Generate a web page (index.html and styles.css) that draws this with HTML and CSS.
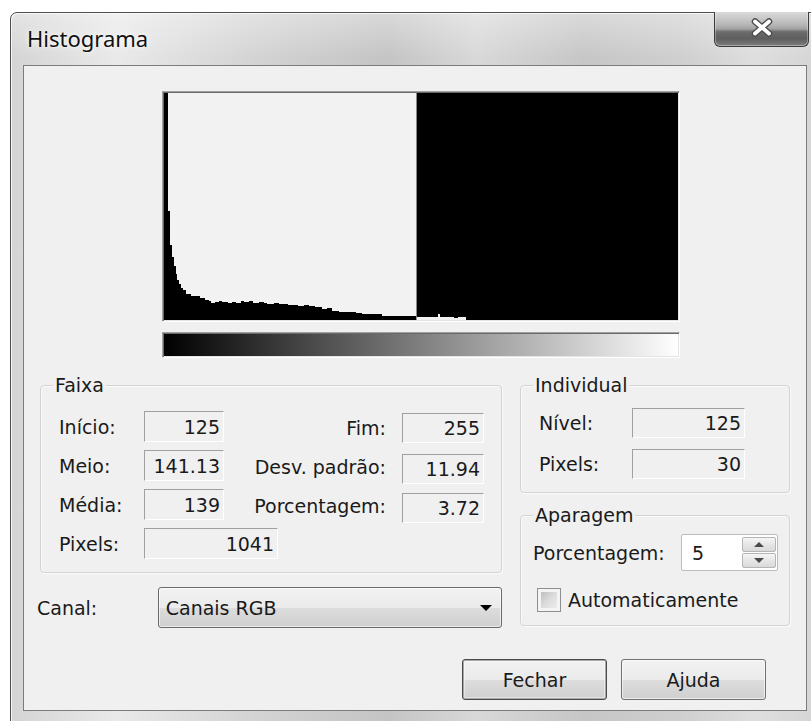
FILE: index.html
```html
<!DOCTYPE html>
<html lang="pt">
<head>
<meta charset="utf-8">
<title>Histograma</title>
<link rel="stylesheet" href="styles.css">
</head>
<body>
<div class="window">
  <div class="titlebar">
    <span class="title">Histograma</span>
    <button class="close" aria-label="Fechar janela">
      <svg width="24" height="19" viewBox="0 0 24 19">
        <path d="M5 3.5 L19 15.5 M19 3.5 L5 15.5" stroke="#4b4b4b" stroke-width="6.5" stroke-linecap="round" fill="none"/>
        <path d="M5 3.5 L19 15.5 M19 3.5 L5 15.5" stroke="#ffffff" stroke-width="3.8" stroke-linecap="round" fill="none"/>
      </svg>
    </button>
  </div>

  <div class="client">
    <div class="hist-box">
      <svg class="hist" width="514" height="227" viewBox="0 0 514 231" preserveAspectRatio="none" shape-rendering="crispEdges">
        <rect x="0" y="0" width="252" height="231" fill="#f2f2f2"/>
        <path fill="#000" d="M0 231 V0 H4 V120 H6 V155 H8 V167 H10 V176 H12 V184 H13 V190 H15 V194 H17 V198 H19 V200 H22 V205 H27 V207 H31 V207 H36 V209 H41 V211 H45 V212 H47 V214 H51 V213 H55 V212 H58 V213 H64 V214 H68 V213 H72 V214 H77 V212 H80 V213 H85 V212 H89 V214 H95 V213 H100 V214 H103 V215 H110 V214 H115 V215 H124 V216 H134 V217 H140 V216 H145 V217 H151 V218 H158 V220 H163 V219 H168 V222 H175 V223 H185 V223 H192 V224 H198 V225 H218 V227 H252 V231 Z"/>
        <rect x="252" y="0" width="262" height="231" fill="#000"/>
        <rect x="252" y="0" width="1" height="231" fill="#8a8a8a"/>
        <path fill="#f2f2f2" d="M253 231 V228 H274 V225 H276 V228 H290 V229 H294 V228 H302 V231 Z"/>
      </svg>
    </div>
    <div class="ramp"></div>

    <div class="panels">
      <div class="col-left">
        <div class="group faixa">
          <span class="group-title">Faixa</span>
          <div class="faixa-grid">
            <span class="lbl">Início:</span>
            <span class="field">125</span>
            <span class="lbl rlbl">Fim:</span>
            <span class="field rfield r1">255</span>

            <span class="lbl">Meio:</span>
            <span class="field">141.13</span>
            <span class="lbl rlbl">Desv. padrão:</span>
            <span class="field rfield r2">11.94</span>

            <span class="lbl">Média:</span>
            <span class="field">139</span>
            <span class="lbl rlbl">Porcentagem:</span>
            <span class="field rfield r2">3.72</span>

            <span class="lbl">Pixels:</span>
            <span class="field wide">1041</span>
          </div>
        </div>
        <div class="canal-row">
          <span class="canal-lbl">Canal:</span>
          <div class="combo">
            <span>Canais RGB</span>
            <span class="arrow"></span>
          </div>
        </div>
      </div>

      <div class="col-right">
        <div class="group individual">
          <span class="group-title">Individual</span>
          <div class="ind-grid">
            <span class="lbl">Nível:</span>
            <span class="field">125</span>
            <span class="lbl">Pixels:</span>
            <span class="field">30</span>
          </div>
        </div>
        <div class="group aparagem">
          <span class="group-title">Aparagem</span>
          <div class="spin-row">
            <span class="spin-lbl">Porcentagem:</span>
            <div class="spin">
              <span class="spin-val">5</span>
              <div class="spin-btns">
                <span class="spin-btn up"><i></i></span>
                <span class="spin-btn down"><i></i></span>
              </div>
            </div>
          </div>
          <label class="check-row">
            <span class="checkbox"></span>
            <span>Automaticamente</span>
          </label>
        </div>
      </div>
    </div>

    <div class="buttons">
      <button class="btn default">Fechar</button>
      <button class="btn">Ajuda</button>
    </div>
  </div>
</div>
</body>
</html>
```

FILE: styles.css
```css
html, body {
  margin: 0;
  padding: 0;
  background: #ffffff;
  width: 811px;
  height: 721px;
  overflow: hidden;
}

/* Aero glass frame */
.window {
  box-sizing: border-box;
  margin: 12px 0 0 10px;
  width: 820px;
  height: 730px;
  padding: 0 0 0 12px;
  border: 1px solid #4e4e4e;
  border-radius: 7px 7px 0 0;
  background:
    linear-gradient(180deg, rgba(255,255,255,0.35), rgba(255,255,255,0) 46px),
    linear-gradient(90deg, #d4d4d4 0, #e9e9e9 13%, #d3d3d3 30%, #c4c4c4 46%, #d8d8d8 57%, #c6c6c6 70%, #cfcfcf 82%, #dedede 91%, #d3d3d3 100%);
  box-shadow: inset 1px 1px 0 rgba(255,255,255,0.75);
}

.titlebar {
  display: flex;
  justify-content: space-between;
  align-items: flex-start;
  height: 52px;
  width: 786px;
}

.title {
  margin: 13px 0 0 4px;
  font-family: "Noto Sans", "Open Sans", sans-serif;
  font-size: 22px;
  line-height: 24px;
  color: #111;
  text-shadow: 0 0 8px rgba(255,255,255,0.9), 0 0 3px rgba(255,255,255,0.9);
}

.close {
  box-sizing: border-box;
  margin-top: -1px;
  width: 95px;
  height: 35px;
  padding: 0;
  border: 1px solid #3c3c3c;
  border-top: none;
  border-radius: 0 0 6px 6px;
  background: linear-gradient(180deg, #dadada 0, #b9b9b9 35%, #a2a2a2 50%, #6c6c6c 58%, #5e5e5e 78%, #7d7d7d 100%);
  box-shadow: inset 0 -1px 0 rgba(255,255,255,0.35), inset 1px 0 0 rgba(255,255,255,0.3), inset -1px 0 0 rgba(255,255,255,0.3);
  display: flex;
  align-items: center;
  justify-content: center;
}

.close svg { display: block; margin-top: -3px; }

/* Client area */
.client {
  box-sizing: border-box;
  width: 784px;
  height: 646px;
  border: 1px solid #7c7c7c;
  background: #f0f0f0;
  font-family: "DejaVu Sans", "Liberation Sans", sans-serif;
  font-size: 19px;
  color: #1a1a1a;
}

.hist-box, .ramp {
  box-sizing: border-box;
  width: 518px;
  margin-left: 138px;
  border: 1px solid;
  border-color: #a0a0a0 #ffffff #ffffff #a0a0a0;
  box-shadow: inset 1px 1px 0 #6a6a6a, inset -1px -1px 0 #e3e3e3;
}

.hist-box {
  margin-top: 25px;
  height: 231px;
  padding: 1px;
}

.hist { display: block; }

.ramp {
  margin-top: 10px;
  height: 26px;
  background: linear-gradient(90deg, #000 0, #ffffff 100%);
  background-clip: content-box;
  padding: 1px;
}

.panels {
  display: flex;
  gap: 18px;
  margin-top: 27px;
  padding-left: 16px;
}

.col-left { width: 462px; }
.col-right { width: 270px; }

.group {
  position: relative;
  box-sizing: border-box;
  border: 1px solid #d3d3d3;
  border-radius: 4px;
  box-shadow: inset 1px 1px 0 #fafafa, 1px 1px 0 #fafafa;
}

.group-title {
  position: absolute;
  top: -13px;
  left: 12px;
  padding: 0 2px;
  line-height: 24px;
  background: #f0f0f0;
}

.lbl {
  align-self: center;
  white-space: nowrap;
}

.field {
  box-sizing: border-box;
  display: flex;
  align-items: center;
  justify-content: flex-end;
  padding-right: 3px;
  border: 1px solid;
  border-color: #a0a0a0 #ffffff #ffffff #a0a0a0;
  white-space: nowrap;
}

/* Faixa */
.faixa {
  height: 188px;
  padding: 25px 0 0 18px;
}

.faixa-grid {
  display: grid;
  grid-template-columns: 85px 80px 178px 82px;
  grid-template-rows: repeat(4, 31px);
  row-gap: 8px;
}

.faixa-grid .field { height: 31px; }

.rlbl {
  text-align: right;
  padding-right: 16px;
  margin-top: 3px;
}

.rfield { height: 30px !important; align-self: start; }
.r1 { margin-top: 2px; }
.r2 { margin-top: 4px; }

.wide {
  grid-column: 2 / span 2;
  width: 134px;
}

/* Canal */
.canal-row {
  display: flex;
  align-items: center;
  margin-top: 14px;
  margin-left: -3px;
}

.canal-lbl { width: 121px; }

.combo {
  box-sizing: border-box;
  width: 345px;
  height: 41px;
  display: flex;
  align-items: center;
  justify-content: space-between;
  padding: 0 9px 0 7px;
  border: 1px solid #6a6a6a;
  border-radius: 3px;
  background: linear-gradient(180deg, #f2f2f2 0, #ebebeb 50%, #dddddd 51%, #cfcfcf 100%);
  box-shadow: inset 0 0 0 1px rgba(255,255,255,0.6);
}

.arrow {
  width: 0;
  height: 0;
  border-left: 6px solid transparent;
  border-right: 6px solid transparent;
  border-top: 6px solid #000;
}

/* Individual */
.individual {
  height: 108px;
  padding: 22px 0 0 18px;
}

.ind-grid {
  display: grid;
  grid-template-columns: 93px 113px;
  grid-template-rows: 30px 30px;
  row-gap: 11px;
}

/* Aparagem */
.aparagem {
  margin-top: 22px;
  height: 111px;
  padding: 18px 0 0 12px;
}

.spin-row {
  display: flex;
  align-items: center;
}

.spin-lbl { width: 148px; }

.spin {
  box-sizing: border-box;
  width: 97px;
  height: 37px;
  display: flex;
  align-items: center;
  justify-content: space-between;
  padding: 0 1px 0 10px;
  border: 1px solid #bcbcbc;
  border-radius: 2px;
  background: #ffffff;
}

.spin-btns {
  display: flex;
  flex-direction: column;
  gap: 1px;
  width: 34px;
}

.spin-btn {
  box-sizing: border-box;
  height: 15px;
  display: flex;
  align-items: center;
  justify-content: center;
  border: 1px solid #b5b5b5;
  border-radius: 2px;
  background: linear-gradient(180deg, #f6f6f6 0, #e6e6e6 50%, #d9d9d9 100%);
}

.spin-btn i {
  width: 0;
  height: 0;
  border-left: 5px solid transparent;
  border-right: 5px solid transparent;
}

.up i { border-bottom: 5px solid #4a4a4a; }
.down i { border-top: 5px solid #4a4a4a; }

.check-row {
  display: flex;
  align-items: center;
  gap: 7px;
  margin: 17px 0 0 4px;
}

.checkbox {
  box-sizing: border-box;
  width: 24px;
  height: 24px;
  border: 1px solid #8e8e8e;
  background: linear-gradient(135deg, #b4b4b4 0, #dcdcdc 50%, #f2f2f2 100%);
  background-clip: content-box;
  padding: 3px;
  box-shadow: inset 0 0 0 3px #f4f4f4;
}

/* Buttons */
.buttons {
  display: flex;
  justify-content: flex-end;
  gap: 14px;
  margin-top: 31px;
  padding-right: 40px;
}

.btn {
  box-sizing: border-box;
  width: 145px;
  height: 41px;
  padding: 0;
  font: inherit;
  color: #1a1a1a;
  border: 1px solid #707070;
  border-radius: 3px;
  background: linear-gradient(180deg, #f2f2f2 0, #ebebeb 50%, #dddddd 51%, #cfcfcf 100%);
  box-shadow: inset 0 0 0 1px rgba(255,255,255,0.6);
}

.btn.default {
  border-color: #4a4a4a;
  box-shadow: inset 0 0 0 1px #a8a8a8, inset 0 0 0 2px rgba(255,255,255,0.4);
}
```
